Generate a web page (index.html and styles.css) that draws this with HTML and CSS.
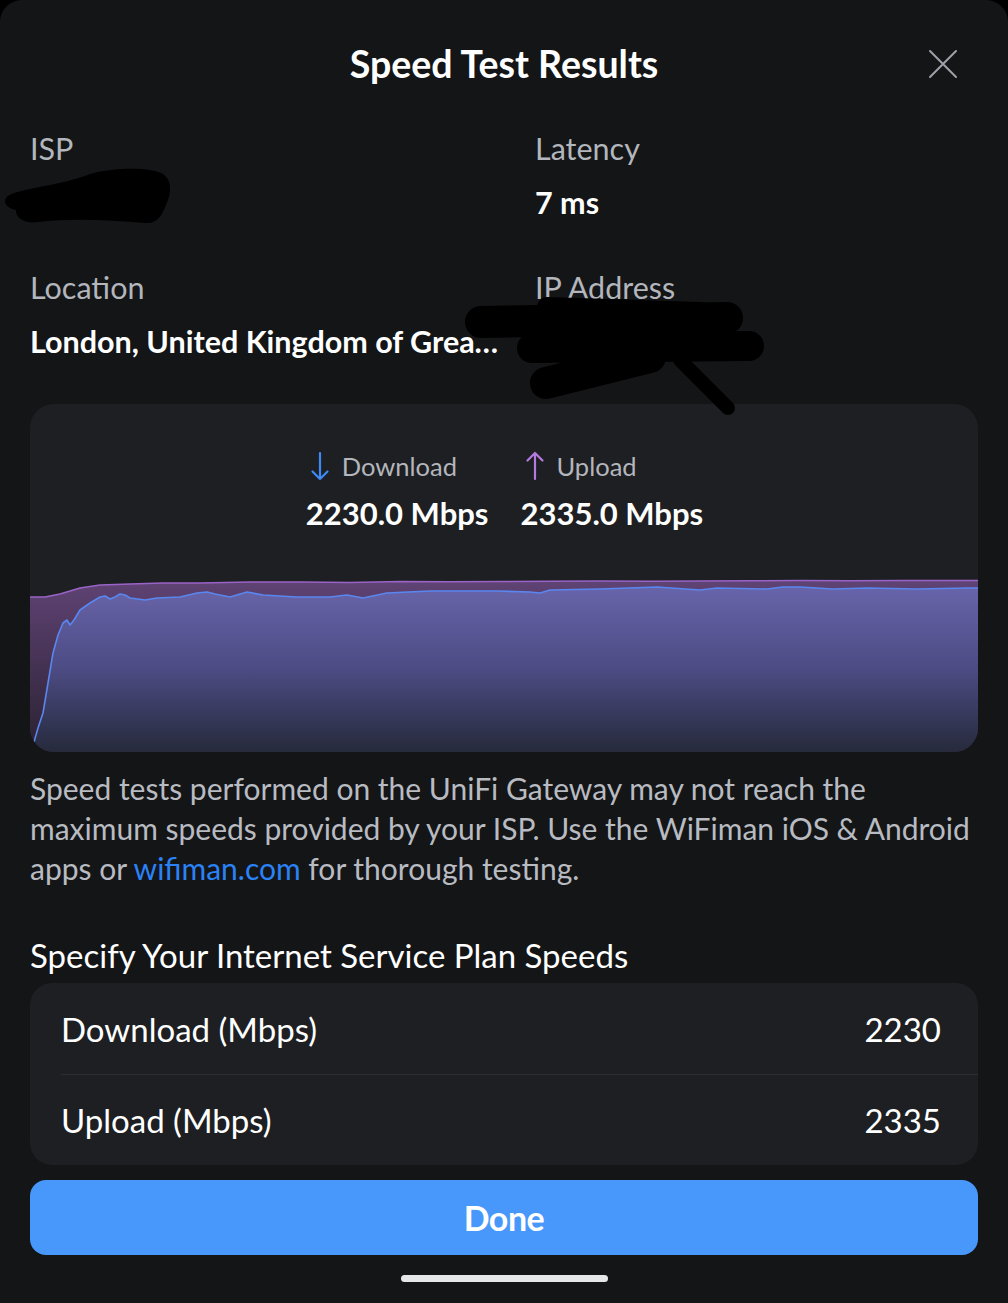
FILE: index.html
```html
<!DOCTYPE html>
<html lang="en">
<head>
<meta charset="utf-8">
<title>Speed Test Results</title>
<link rel="stylesheet" href="styles.css">
</head>
<body>
<div class="sheet">
  <header class="header">
    <h1 class="title">Speed Test Results</h1>
    <button class="close" aria-label="Close">
      <svg width="30" height="30" viewBox="0 0 30 30"><path d="M2 2 L28 28 M28 2 L2 28" stroke="#9ea1a8" stroke-width="2" fill="none" stroke-linecap="round"/></svg>
    </button>
  </header>

  <section class="info">
    <div class="cell">
      <div class="label">ISP</div>
      <div class="value">&nbsp;</div>
    </div>
    <div class="cell">
      <div class="label">Latency</div>
      <div class="value">7 ms</div>
    </div>
    <div class="cell row2">
      <div class="label">Location</div>
      <div class="value trunc">London, United Kingdom of Great Britain and Northern Ireland</div>
    </div>
    <div class="cell row2">
      <div class="label">IP Address</div>
      <div class="value">&nbsp;</div>
    </div>
  </section>

  <section class="chart-card">
    <div class="legend">
      <div class="metric">
        <div class="metric-head">
          <svg class="arrow" width="28" height="30" viewBox="0 0 28 30"><path d="M14 2 V28 M6.5 20.5 L14 28 L21.5 20.5" stroke="#3d8af7" stroke-width="2.2" fill="none" stroke-linecap="round" stroke-linejoin="round"/></svg>
          <span class="metric-label">Download</span>
        </div>
        <div class="metric-value">2230.0 Mbps</div>
      </div>
      <div class="metric">
        <div class="metric-head">
          <svg class="arrow" width="28" height="30" viewBox="0 0 28 30"><path d="M14 28 V2 M6.5 9.5 L14 2 L21.5 9.5" stroke="#b47ae0" stroke-width="2.2" fill="none" stroke-linecap="round" stroke-linejoin="round"/></svg>
          <span class="metric-label">Upload</span>
        </div>
        <div class="metric-value">2335.0 Mbps</div>
      </div>
    </div>
    <svg class="chart" width="948" height="174" viewBox="0 0 948 174" preserveAspectRatio="none">
      <defs>
        <linearGradient id="gUp" x1="0" y1="0" x2="0" y2="1">
          <stop offset="0" stop-color="#5f4374"/>
          <stop offset="1" stop-color="#2a2131"/>
        </linearGradient>
        <linearGradient id="gDown" x1="0" y1="0" x2="0" y2="1">
          <stop offset="0" stop-color="#6864aa"/>
          <stop offset="0.5" stop-color="#4c4b83"/>
          <stop offset="1" stop-color="#262a3b"/>
        </linearGradient>
      </defs>
      <path d="M0 19 L15 19 L30 16 L50 10 L70 7 L100 6 L133 5 L170 5 L220 4 L270 4 L320 4.5 L370 3.5 L420 3.8 L470 3.5 L520 3.2 L570 3 L620 3.3 L670 3 L720 2.8 L770 2.5 L820 2.8 L870 2.5 L948 2.5 L948 174 L0 174 Z" fill="url(#gUp)"/>
      <path d="M0 19 L15 19 L30 16 L50 10 L70 7 L100 6 L133 5 L170 5 L220 4 L270 4 L320 4.5 L370 3.5 L420 3.8 L470 3.5 L520 3.2 L570 3 L620 3.3 L670 3 L720 2.8 L770 2.5 L820 2.8 L870 2.5 L948 2.5" fill="none" stroke="#9a63c8" stroke-width="1.6"/>
      <path d="M2 174 L3 170 L4 164 L8 150 L13 135 L18 105 L23 75 L28 57 L33 45 L37 42 L40 47 L44 42 L50 32 L60 25 L70 19 L75 18 L80 21 L85 19 L90 16 L95 17 L100 20 L115 22 L127 20 L150 19 L167 15 L177 14 L185 16 L200 19 L217 14 L233 17 L267 19 L300 19 L317 17 L333 20 L357 15 L400 13 L467 13 L500 14 L510 15 L520 12 L570 11 L627 9 L670 12 L687 10 L737 11 L753 9 L770 9 L803 11 L837 10 L887 11 L937 10 L948 10 L948 174 Z" fill="url(#gDown)"/>
      <path d="M2 174 L3 170 L4 164 L8 150 L13 135 L18 105 L23 75 L28 57 L33 45 L37 42 L40 47 L44 42 L50 32 L60 25 L70 19 L75 18 L80 21 L85 19 L90 16 L95 17 L100 20 L115 22 L127 20 L150 19 L167 15 L177 14 L185 16 L200 19 L217 14 L233 17 L267 19 L300 19 L317 17 L333 20 L357 15 L400 13 L467 13 L500 14 L510 15 L520 12 L570 11 L627 9 L670 12 L687 10 L737 11 L753 9 L770 9 L803 11 L837 10 L887 11 L937 10 L948 10" fill="none" stroke="#5a86ef" stroke-width="1.6" stroke-linejoin="round"/>
    </svg>
  </section>

  <p class="note">Speed tests performed on the UniFi Gateway may not reach the maximum speeds provided by your ISP. Use the WiFiman iOS &amp; Android apps or <a class="link" href="#">wifiman.com</a> for thorough testing.</p>

  <h2 class="plan-title">Specify Your Internet Service Plan Speeds</h2>

  <section class="plan-card">
    <div class="plan-row">
      <span class="plan-label">Download (Mbps)</span>
      <span class="plan-value">2230</span>
    </div>
    <div class="plan-row">
      <span class="plan-label">Upload (Mbps)</span>
      <span class="plan-value">2335</span>
    </div>
  </section>

  <button class="done">Done</button>

  <div class="home-indicator"></div>

  <svg class="redact" width="1008" height="430" viewBox="0 0 1008 430">
    <path d="M8 196 C20 188 60 186 90 174 C110 168 150 166 163 174 C173 181 171 195 166 205 C162 215 158 224 145 223 C110 220 70 218 38 222 C25 224 15 218 16 210 C5 208 2 200 8 196 Z" fill="#000"/>
    <g stroke="#000" fill="none" stroke-linecap="round">
      <path d="M481 322 L727 318" stroke-width="32"/>
      <path d="M547 307 L700 312" stroke-width="20"/>
      <path d="M532 348 L749 346" stroke-width="30"/>
      <path d="M546 383 L650 357" stroke-width="32"/>
      <path d="M680 360 L728 408" stroke-width="14"/>
    </g>
  </svg>
</div>
</body>
</html>
```

FILE: styles.css
```css
* { box-sizing: border-box; }
html, body { margin: 0; padding: 0; background: #000; }
body { font-family: Lato, "Noto Sans", sans-serif; color: #fff; }

.sheet {
  position: relative;
  width: 1008px;
  min-height: 1303px;
  background: #141517;
  border-radius: 22px 22px 0 0;
  padding: 0 30px;
  display: flex;
  flex-direction: column;
}

.header {
  height: 128px;
  display: flex;
  align-items: center;
  justify-content: center;
  position: relative;
}
.title {
  margin: 0;
  font-size: 37.5px;
  font-weight: 700;
  line-height: 44px;
  color: #fff;
}
.close {
  position: absolute;
  right: 20px;
  top: 49px;
  width: 30px;
  height: 30px;
  padding: 0;
  border: 0;
  background: none;
}
.close svg { display: block; }

.info {
  display: grid;
  grid-template-columns: 505px 1fr;
  row-gap: 45px;
}
.cell { min-width: 0; padding-right: 8px; }
.label {
  font-size: 30.5px;
  line-height: 40px;
  color: #b3b6bc;
}
.value {
  margin-top: 14px;
  font-size: 30.5px;
  line-height: 40px;
  font-weight: 700;
  color: #fff;
}
.trunc { white-space: nowrap; overflow: hidden; text-overflow: ellipsis; max-width: 470px; }

.chart-card {
  margin-top: 43px;
  height: 348px;
  background: #1e1f23;
  border-radius: 24px;
  overflow: hidden;
  display: flex;
  flex-direction: column;
}
.legend {
  display: flex;
  justify-content: center;
  gap: 32px;
  padding-top: 44px;
  padding-left: 1px;
}
.metric-head {
  display: flex;
  align-items: center;
  gap: 8px;
  height: 36px;
  margin-left: 0;
}
.arrow { display: block; }
.metric-label { font-size: 25.5px; color: #b3b6bc; }
.metric-value {
  margin-top: 11px;
  font-size: 31px;
  line-height: 36px;
  font-weight: 700;
  color: #fff;
}
.chart { display: block; margin-top: auto; }

.note {
  margin: 16px 0 0;
  font-size: 30px;
  line-height: 40px;
  color: #b8bbc1;
}
.link { color: #2a82f6; text-decoration: none; }

.plan-title {
  margin: 47px 0 0;
  font-size: 33px;
  line-height: 40px;
  font-weight: 400;
  color: #fff;
}

.plan-card {
  margin-top: 8px;
  background: #1e1f23;
  border-radius: 22px;
  padding-left: 31px;
}
.plan-row {
  height: 91px;
  display: flex;
  align-items: center;
  justify-content: space-between;
  padding-right: 37px;
  font-size: 33px;
}
.plan-row + .plan-row { border-top: 1px solid #2d2e33; }
.plan-label { color: #fff; }
.plan-value { color: #fff; }

.done {
  margin-top: 15px;
  height: 75px;
  width: 100%;
  border: 0;
  border-radius: 16px;
  background: #4897fb;
  color: #fff;
  font-family: inherit;
  font-size: 34px;
  letter-spacing: -0.5px;
  font-weight: 700;
}

.home-indicator {
  margin: 20px auto 0;
  width: 207px;
  height: 7px;
  border-radius: 4px;
  background: #e6e7e8;
}

.redact {
  position: absolute;
  left: 0;
  top: 0;
  pointer-events: none;
}
```
